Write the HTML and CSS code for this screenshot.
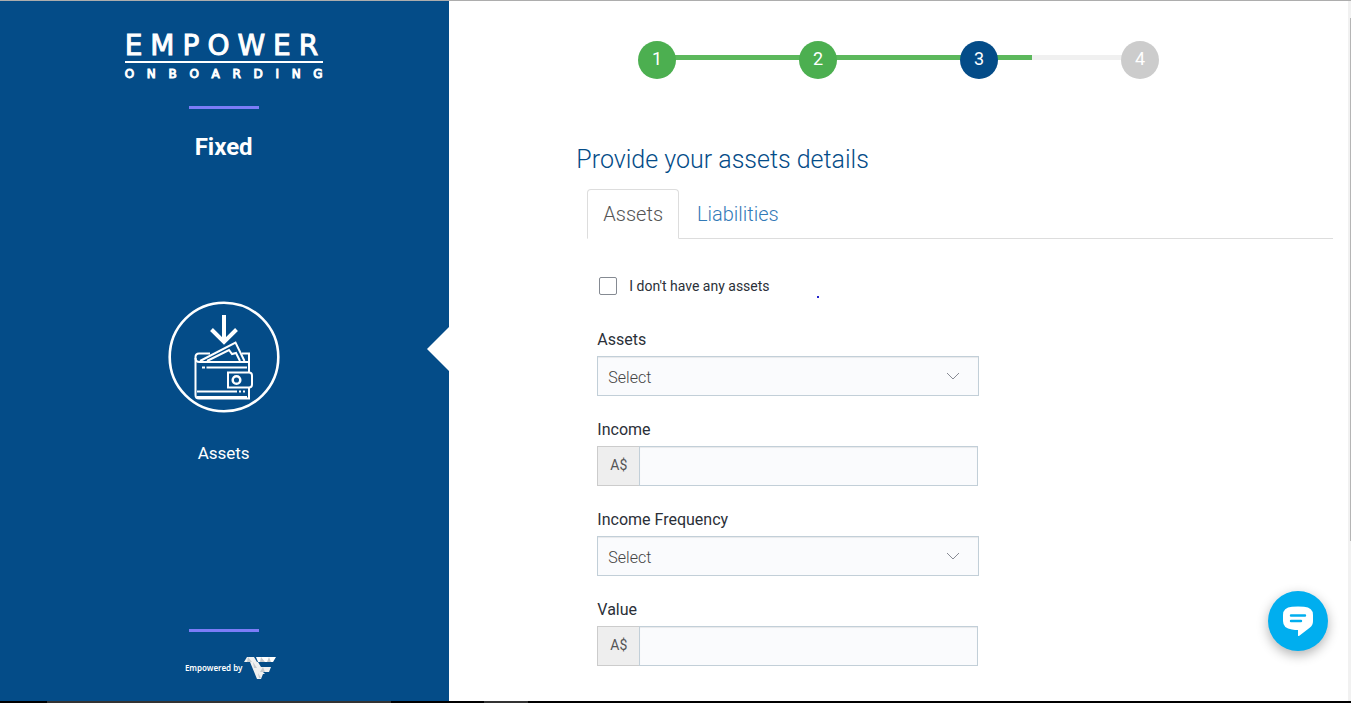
FILE: index.html
```html
<!DOCTYPE html>
<html lang="en">
<head>
<meta charset="utf-8">
<title>Empower Onboarding</title>
<link rel="stylesheet" href="styles.css">
</head>
<body>
<div class="page">
  <aside class="sidebar">
    <div class="sidebar-top">
      <div class="brand">
        <span class="brand-name">EMPOWER</span>
        <span class="brand-sub"><span>O</span><span>N</span><span>B</span><span>O</span><span>A</span><span>R</span><span>D</span><span>I</span><span>N</span><span>G</span></span>
      </div>
      <div class="rule"></div>
      <h2 class="plan">Fixed</h2>
    </div>
    <div class="section">
      <svg class="section-icon" viewBox="0 0 112 112" fill="none" stroke="#fff" stroke-width="2" aria-hidden="true">
        <circle cx="56" cy="56" r="54.3" stroke-width="2.6"/>
        <path d="M56 14v26" stroke-width="4"/>
        <path d="M43.500 28.500L56 41l12.500-12.500" stroke-width="4"/>
        <path d="M81 87v10.500H31q-3.500 0-3.500-3.500V56q0-3.500 3.500-3.500h11"/>
        <path d="M27.500 57q0 4 4 4H81v10M74 52.500h7V61"/>
        <path d="M32 60l35.500-18.500L76.500 60M39 60l22-11 3 4 4-1 4 8"/>
        <path d="M38.500 66.500H79M29 90.500h40M29 96h50"/>
        <path d="M34 66.500h3M71 90.500h2M75 90.500h2"/>
        <path d="M81 71.500H60v15h21q3 0 3-3v-9q0-3-3-3z"/>
        <circle cx="68.500" cy="79" r="3.800" stroke-width="2.500"/>
      </svg>
      <span class="section-name">Assets</span>
    </div>
    <div class="sidebar-bottom">
      <div class="rule"></div>
      <div class="powered">
        <span>Empowered by</span>
        <svg class="powered-logo" viewBox="0 0 32 22" aria-hidden="true">
          <path fill="#f1f1f1" d="M3 0h7l3 5H0z"/>
          <path fill="#fff" d="M12 0h20l-3 5H14z"/>
          <path fill="#f0f0f0" d="M6 5h8l3 5h10l-2 5h-6l2 2h-2l-2 5h-4z"/>
          <path fill="#c6cace" d="M4 0l4 5H3zM17 0l4 5h-5zM25 0l2 5h-4zM9 5l4 6h-3zM19 10l2 5h-5zM14 16l3 5h-2z"/>
        </svg>
      </div>
    </div>
  </aside>

  <main class="main">
    <ol class="steps">
      <li class="step done">1</li>
      <li class="step done">2</li>
      <li class="step current">3</li>
      <li class="step">4</li>
    </ol>
    <div class="content">
      <h1 class="title">Provide your assets details</h1>
      <nav class="tabs">
        <a class="tab active" href="#assets">Assets</a>
        <a class="tab" href="#liabilities">Liabilities</a>
      </nav>
      <form class="form" id="assets">
        <div class="none-row">
          <label class="none"><input type="checkbox" class="check">I don't have any assets</label>
          <span class="dot"></span>
        </div>
        <div class="field">
          <label for="asset">Assets</label>
          <div class="select-wrap">
            <select id="asset" class="select"><option>Select</option></select>
            <svg class="chevron" viewBox="0 0 14 8" aria-hidden="true"><path d="M1 1l6 6 6-6"/></svg>
          </div>
        </div>
        <div class="field">
          <label for="income">Income</label>
          <div class="money"><span class="unit">A$</span><input id="income" class="amount" type="text"></div>
        </div>
        <div class="field">
          <label for="frequency">Income Frequency</label>
          <div class="select-wrap">
            <select id="frequency" class="select"><option>Select</option></select>
            <svg class="chevron" viewBox="0 0 14 8" aria-hidden="true"><path d="M1 1l6 6 6-6"/></svg>
          </div>
        </div>
        <div class="field">
          <label for="value">Value</label>
          <div class="money"><span class="unit">A$</span><input id="value" class="amount" type="text"></div>
        </div>
      </form>
    </div>
  </main>
  <div class="scroll"><div class="thumb"></div></div>
</div>
<div class="edge"><span class="edge-a"></span><span class="edge-b"></span></div>
<button class="chat" type="button" aria-label="Chat">
  <svg viewBox="0 0 32 30" aria-hidden="true">
    <path fill="#fff" d="M10 .8Q16 0 22 .8 31 1.500 31 9v6q0 4-3 6.500L17 30q-1 .5-1-1v-5q-3 0-6-.5Q1 22.500 1 15V9Q1 1.500 10 .8z"/>
    <path stroke="#00aeef" stroke-width="2.400" stroke-linecap="round" d="M9 9.500h14M9 15h10"/>
  </svg>
</button>
</body>
</html>
```

FILE: styles.css
```css
* {
  box-sizing: border-box;
}

body {
  display: flex;
  flex-direction: column;
  min-height: 100vh;
  margin: 0;
  border-top: 1px solid #adadad;
  background: #fff;
  color: #2b3038;
  font-family: Roboto, "Liberation Sans", sans-serif;
  font-size: 16px;
  line-height: 20px;
}

.page {
  display: grid;
  flex: 1;
  grid-template-columns: minmax(0, 1fr) minmax(0, 2fr) 3px;
}

.sidebar {
  position: relative;
  display: flex;
  flex-direction: column;
  align-items: center;
  justify-content: space-between;
  padding: 33px 2px 22px 0;
  background: #044c88;
  color: #fff;
}

.sidebar::after {
  position: absolute;
  top: 326px;
  right: 0;
  border: 22px solid transparent;
  border-right-color: #fff;
  border-left: 0;
  content: "";
}

.sidebar-top,
.section,
.sidebar-bottom {
  display: flex;
  flex-direction: column;
  align-items: center;
}

.brand {
  display: flex;
  flex-direction: column;
  width: 198px;
}

.brand-name {
  padding-bottom: 3px;
  border-bottom: 2px solid #fff;
  font: 28px/24px "DejaVu Sans", sans-serif;
  letter-spacing: 8px;
  white-space: nowrap;
  -webkit-text-stroke: 1px #fff;
}

.brand-sub {
  display: flex;
  justify-content: space-between;
  padding-top: 3px;
  font: 12px/16px "DejaVu Sans", sans-serif;
  -webkit-text-stroke: 1px #fff;
}

.rule {
  width: 70px;
  height: 3px;
  background: #7c7cf8;
}

.sidebar-top .rule {
  margin-top: 24px;
}

.plan {
  margin: 24px 0 0;
  font-size: 24px;
  font-weight: 700;
  line-height: 28px;
}

.section {
  padding-bottom: 26px;
}

.section-icon {
  width: 112px;
  height: 112px;
}

.section-name {
  margin-top: 30px;
  font-size: 17px;
}

.powered {
  display: flex;
  align-items: center;
  gap: 2px;
  margin-top: 25px;
  padding-left: 14px;
  font: 600 8px/12px "Noto Sans", sans-serif;
}

.powered-logo {
  width: 32px;
  height: 22px;
}

.main {
  padding: 40px 0 34px;
}

.steps {
  display: flex;
  justify-content: space-between;
  width: 521px;
  max-width: 100%;
  margin: 0 auto;
  padding: 0;
  background: linear-gradient(90deg, #5cb85c 375px, #f0f0f0 375px) center 14px / 483px 5px no-repeat;
  list-style: none;
}

.step {
  width: 38px;
  height: 38px;
  border-radius: 50%;
  background: #ccc;
  color: #fff;
  font-size: 18px;
  line-height: 36px;
  text-align: center;
}

.step.done {
  background: #4caf50;
}

.step.current {
  background: #044c88;
}

.content {
  padding: 65px 15px 0 127px;
}

.title {
  margin: 0;
  color: #044c88;
  font-size: 25px;
  font-weight: 300;
  line-height: 32px;
}

.tabs {
  display: flex;
  margin: 13px 0 0 11px;
  border-bottom: 1px solid #ddd;
  font-size: 20px;
  font-weight: 300;
}

.tab {
  margin-bottom: -1px;
  padding: 14px 15px;
  border: 1px solid transparent;
  border-radius: 4px 4px 0 0;
  color: #337ab7;
  text-decoration: none;
}

.tab + .tab {
  margin-left: 2px;
}

.tab.active {
  border-color: #ddd #ddd #fff;
  background: #fff;
  color: #555;
}

.form {
  display: flex;
  flex-direction: column;
  gap: 24px;
  max-width: 403px;
  padding: 37px 0 0 21px;
}

.none-row {
  display: flex;
  justify-content: space-between;
  margin-bottom: 10px;
  padding: 0 160px 0 2px;
}

.none {
  display: flex;
  align-items: center;
  gap: 12px;
  font-size: 14px;
  white-space: nowrap;
}

.check {
  width: 18px;
  height: 18px;
  margin: 0;
  appearance: none;
  border: 1px solid #858a92;
  border-radius: 2px;
  background: #fff;
}

.dot {
  align-self: flex-end;
  width: 2px;
  height: 2px;
  margin-bottom: -2px;
  background: #22c;
}

.field {
  display: flex;
  flex-direction: column;
  gap: 6px;
}

.select-wrap {
  display: grid;
  align-items: center;
}

.select,
.amount {
  width: 100%;
  height: 40px;
  padding: 3px 10px 0;
  appearance: none;
  border: 1px solid #c2cfd8;
  border-radius: 0;
  background: #fafbfd;
  box-shadow: inset 0 1px 1px rgba(0, 0, 0, 0.075);
  color: #444;
  font: 300 16px/20px Roboto, sans-serif;
}

.select,
.chevron {
  grid-area: 1 / 1;
}

.chevron {
  justify-self: end;
  width: 14px;
  height: 8px;
  margin-right: 19px;
  fill: none;
  stroke: #888b94;
  pointer-events: none;
}

.money {
  display: flex;
  margin-right: 1px;
}

.unit {
  flex: none;
  width: 42px;
  border: 1px solid #ccc;
  border-right: 0;
  background: #eee;
  color: #555;
  font-size: 14px;
  line-height: 36px;
  text-align: center;
}

.amount {
  flex: 1;
  min-width: 0;
}

.scroll {
  padding: 17px 0 160px 2px;
  background: #f1f1f1;
}

.thumb {
  height: 100%;
  background: #b5b5b5;
}

.edge {
  display: flex;
  height: 2px;
  background: #000;
}

.edge-a {
  width: 344px;
  margin-left: 47px;
  background: #333;
}

.edge-b {
  width: 44px;
  margin-left: 93px;
  background: #333;
}

.chat {
  position: fixed;
  right: 23px;
  bottom: 52px;
  display: grid;
  place-items: center;
  width: 60px;
  height: 60px;
  padding: 0;
  border: 0;
  border-radius: 50%;
  background: #00aeef;
  box-shadow: 0 4px 12px rgba(0, 0, 0, 0.3);
}

.chat svg {
  width: 32px;
  height: 30px;
}
```
